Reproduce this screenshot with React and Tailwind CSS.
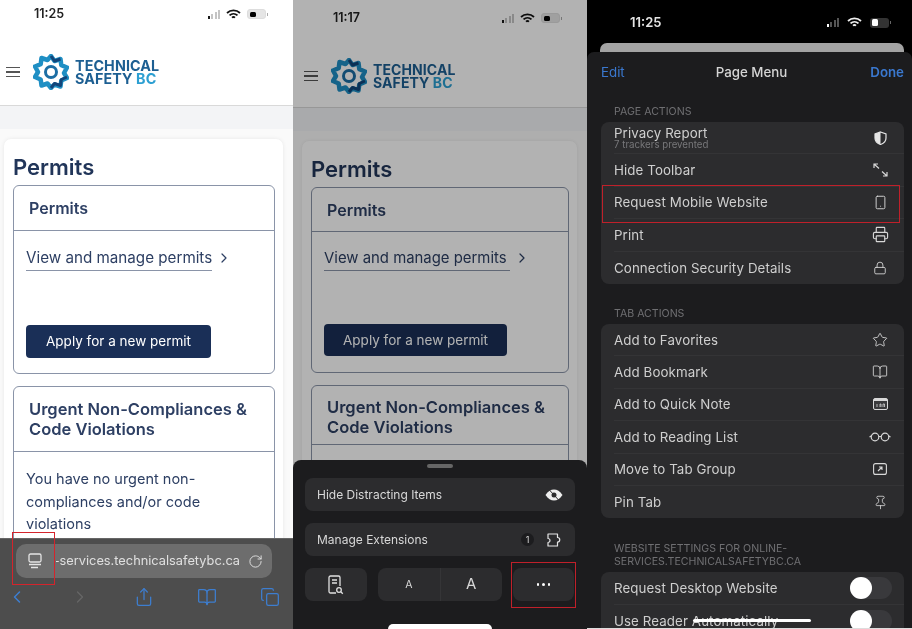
import { BookOpen, ChevronLeft, ChevronRight, Copy, Lock, Pin, Printer, RotateCw, Share, Smartphone, Star } from "lucide-react"

function Signal({ dark }) {
  const on = dark ? "bg-white" : "bg-[#1a1a1a]"
  const off = dark ? "bg-[#555]" : "bg-[#c4c4c4]"
  return (
    <div className="flex items-end gap-[1.5px]">
      <div className={`w-[2px] h-[3px] ${on}`}></div>
      <div className={`w-[2px] h-[5px] ${off}`}></div>
      <div className={`w-[2px] h-[7px] ${off}`}></div>
      <div className={`w-[2px] h-[9px] ${off}`}></div>
    </div>
  )
}

function Wifi({ color }) {
  return (
    <svg width="15" height="11" viewBox="0 0 15 11" fill="none" stroke={color} strokeWidth="1.8">
      <path d="M1 4a9.5 9.5 0 0 1 13 0" />
      <path d="M3.5 6.4a6 6 0 0 1 8 0" />
      <path d="M6 8.6a2.4 2.4 0 0 1 3 0" />
    </svg>
  )
}

function Battery({ dark }) {
  return (
    <div className="flex items-center gap-[1px]">
      <div className={`w-[19px] h-[10px] rounded-[3px] p-[1.5px] ${dark ? "bg-[#333]" : "bg-[#e5e5e5] border border-[#ddd]"}`}>
        <div className={`w-[6px] h-full rounded-[1.5px] ${dark ? "bg-white" : "bg-black"}`}></div>
      </div>
      <div className={`w-[1px] h-[3px] ${dark ? "bg-[#666]" : "bg-[#aaa]"}`}></div>
    </div>
  )
}

function Gear() {
  return (
    <svg width="36" height="36" viewBox="0 0 36 36" fill="none">
      <path
        d="M18 2l3.5 5 6-2 .8 6.2 5.7 2.3-3 5.5 3 5-5.7 2.5-.8 6-6-2L18 34l-3.5-4.5-6 2-.8-6L2 23l3-5-3-5.5 5.7-2.3.8-6.2 6 2z"
        stroke="#1f8fc4"
        strokeWidth="4.5"
        strokeLinejoin="round"
      />
      <path d="M18 2l3.5 5 6-2M34 23l-5.7 2.5-.8 6-6-2L18 34" stroke="#12457a" strokeWidth="3" strokeLinejoin="round" />
      <circle cx="18" cy="18" r="5.5" stroke="#1c6ea4" strokeWidth="3" />
    </svg>
  )
}

function Logo({ textSize }) {
  return (
    <div className="flex items-center gap-[6px] font-['Inter',sans-serif]">
      <Gear />
      <div className="leading-[13px] font-bold tracking-[0.1px] text-[#1d5f92]" style={{ fontSize: textSize }}>
        <div>TECHNICAL</div>
        <div>
          SAFETY <span className="text-[#2c9fd2]">BC</span>
        </div>
      </div>
    </div>
  )
}

// white website view, both left phones use it with small offsets
function WebPage({ time, o }) {
  return (
    <div className="w-full font-['Inter',sans-serif] text-[#2d3f63]">
      <div className="bg-white border-b border-[#d9d9d9]" style={{ height: o.headerH }}>
        <div className="flex items-center justify-between pr-[25px]" style={{ paddingTop: o.statusTop, paddingLeft: o.timeLeft }}>
          <span className="text-[12.5px] leading-[14px] font-semibold text-[#222]">{time}</span>
          <div className="flex items-center gap-[6px]">
            <Signal />
            <Wifi color="#111" />
            <Battery />
          </div>
        </div>
        <div className="flex items-center gap-[13px] mt-[33px]" style={{ paddingLeft: o.burgerLeft }}>
          <div className="flex flex-col gap-[3px]">
            <div className="w-[14px] h-[1.5px] bg-[#555]"></div>
            <div className="w-[14px] h-[1.5px] bg-[#555]"></div>
            <div className="w-[14px] h-[1.5px] bg-[#555]"></div>
          </div>
          <Logo textSize={o.logoSize} />
        </div>
      </div>
      <div className="h-[23px] bg-[#f3f4f6]"></div>
      <div className="bg-[#fafafa] pt-[10px] pr-[10px]" style={{ paddingLeft: o.cardLeft }}>
        <div className="bg-white rounded-t-[7px] shadow-[0_0_4px_rgba(0,0,0,0.08)] pt-[14px] pl-[9px] pr-[8px]">
          <h1 className="text-[22px] leading-[28px] font-semibold text-[#213559]">Permits</h1>
          <div className="mt-[4px] border border-[#8a94a8] rounded-[6px]">
            <div className="flex items-center pl-[15px] border-b border-[#8a94a8] text-[16px] font-semibold" style={{ height: o.head1H }}>
              Permits
            </div>
            <div className="px-[12px]" style={{ height: o.bodyH, paddingTop: o.bodyTop }}>
              <div className="flex items-center gap-[4px]">
                <span className="border-b border-[#8a94a8] w-[186px] leading-[22px] pb-[1px] whitespace-nowrap" style={{ fontSize: o.linkSize }}>
                  View and manage permits
                </span>
                <ChevronRight size={16} strokeWidth={1.8} className="-mt-[3px]" />
              </div>
              <div className="rounded-[4px] bg-[#1a2f57] text-white text-[13.5px] flex items-center justify-center" style={{ marginTop: o.btnTop, height: o.btnH, width: o.btnW }}>
                Apply for a new permit
              </div>
            </div>
          </div>
          <div className="mt-[12px] border border-[#8a94a8] rounded-[6px] h-[200px]">
            <div className="border-b border-[#8a94a8] px-[15px] pt-[12px] text-[16.5px] font-semibold" style={{ height: o.head2H, lineHeight: o.head2Lead }}>
              Urgent Non-Compliances &amp; Code Violations
            </div>
            <p className="px-[12px] pt-[16px] text-[14.5px] leading-[22.5px]">You have no urgent non-compliances and/or code violations</p>
          </div>
        </div>
      </div>
    </div>
  )
}

function SafariBar() {
  return (
    <div className="absolute left-0 right-0 top-[538px] h-[91px] bg-[#4d4d4d] border-t border-[#666] font-['Inter',sans-serif]">
      <div className="ml-[16px] mr-[21px] mt-[5px] h-[34px] rounded-[10px] bg-[#6d6d6d] flex items-center pl-[11px] pr-[9px]">
        <svg width="16" height="17" viewBox="0 0 16 17" fill="none" stroke="#e5e5e5" strokeWidth="1.3">
          <rect x="2" y="1" width="12" height="8" rx="1.5" />
          <path d="M2 11.5h12M4 14.5h7" />
        </svg>
        <div className="w-[184px] ml-[13px] overflow-hidden whitespace-nowrap text-[12.8px] text-[#e0e0e0] flex justify-end">online-services.technicalsafetybc.ca</div>
        <RotateCw size={15} strokeWidth={1.6} className="ml-auto text-[#ddd]" />
      </div>
      <div className="flex items-center pl-[7px] gap-[43.25px] mt-[9px] text-[#3d7ed0]">
        <ChevronLeft size={20} strokeWidth={1.8} />
        <ChevronRight size={20} strokeWidth={1.5} className="text-[#666]" />
        <Share size={20} strokeWidth={1.5} />
        <BookOpen size={20} strokeWidth={1.5} />
        <Copy size={20} strokeWidth={1.5} />
      </div>
    </div>
  )
}

function ReaderIcon() {
  return (
    <svg width="18" height="20" viewBox="0 0 18 20" fill="none" stroke="#e0e0e0" strokeWidth="1.3">
      <path d="M9 18H3.5A1.5 1.5 0 0 1 2 16.5v-14A1.5 1.5 0 0 1 3.5 1h8A1.5 1.5 0 0 1 13 2.5V11" />
      <path d="M5 5h5M5 8h5" />
      <circle cx="12" cy="15" r="2.3" />
      <path d="M13.8 16.8l2 2" />
    </svg>
  )
}

function Sheet() {
  return (
    <div className="absolute left-0 right-0 top-[460px] bottom-0 bg-[#1c1c1e] rounded-t-[8px] px-[12px] font-['Inter',sans-serif] text-[#d8d8d8]">
      <div className="mx-auto mt-[4px] w-[26px] h-[4px] rounded-full bg-[#666]"></div>
      <div className="mt-[10px] h-[33px] rounded-[8px] bg-[#2c2c2e] flex items-center justify-between px-[12px] text-[12px]">
        <span>Hide Distracting Items</span>
        <svg width="18" height="14" viewBox="0 0 18 14">
          <path d="M0.5 7C3 3 6 1.5 9 1.5S15 3 17.5 7C15 11 12 12.5 9 12.5S3 11 0.5 7z" fill="#eee" />
          <circle cx="9" cy="7" r="2.5" fill="#2c2c2e" />
          <path d="M3.5 1L14.5 13" stroke="#2c2c2e" strokeWidth="1" />
        </svg>
      </div>
      <div className="mt-[12px] h-[33px] rounded-[8px] bg-[#2c2c2e] flex items-center px-[12px] text-[12px]">
        <span>Manage Extensions</span>
        <span className="ml-auto w-[13px] h-[13px] rounded-full bg-[#1c1c1e] text-[9px] flex items-center justify-center">1</span>
        <svg className="ml-[13px]" width="16" height="14" viewBox="0 0 16 14" fill="none" stroke="#e5e5e5" strokeWidth="1.2">
          <path d="M1 1h9.5v3.5a2 2 0 1 1 0 4.500V13H1V9.500a1.800 1.800 0 0 0 0-4z" strokeLinejoin="round" />
        </svg>
      </div>
      <div className="mt-[12px] flex gap-[11px] h-[33px]">
        <div className="w-[62px] rounded-[8px] bg-[#2c2c2e] flex items-center justify-center">
          <ReaderIcon />
        </div>
        <div className="w-[124px] rounded-[8px] bg-[#2c2c2e] flex divide-x divide-[#353537]">
          <div className="flex-1 flex items-center justify-center text-[10.5px]">A</div>
          <div className="flex-1 flex items-center justify-center text-[15px]">A</div>
        </div>
        <div className="w-[61px] rounded-[8px] bg-[#2c2c2e] flex items-center justify-center gap-[3px]">
          <div className="w-[2.5px] h-[2.5px] rounded-full bg-white"></div>
          <div className="w-[2.5px] h-[2.5px] rounded-full bg-white"></div>
          <div className="w-[2.5px] h-[2.5px] rounded-full bg-white"></div>
        </div>
      </div>
      <div className="absolute left-[95px] top-[164px] w-[104px] h-[5px] rounded-t-full bg-white"></div>
    </div>
  )
}

function MenuRow({ label, sub, icon, toggle, last }) {
  return (
    <div className={`h-[32.4px] ml-[13px] pr-[13px] flex items-center justify-between ${last ? "" : "border-b border-[#343436]"}`}>
      <div className="leading-none">
        <div className="text-[13.3px] leading-[14px] tracking-[0.1px] text-[#cfcfcf]">{label}</div>
        {sub && <div className="text-[9.7px] leading-[10px] text-[#77777a]">{sub}</div>}
      </div>
      {icon && <div className="w-[22px] flex justify-center text-[#d8d8d8]">{icon}</div>}
      {toggle && (
        <div className="w-[42px] h-[22px] rounded-full bg-[#39393c] -mr-[1px]">
          <div className="w-[22px] h-[22px] rounded-full bg-white"></div>
        </div>
      )}
    </div>
  )
}

function Glasses() {
  return (
    <svg width="22" height="10" viewBox="0 0 22 10" fill="none" stroke="#d8d8d8" strokeWidth="1.2">
      <circle cx="6" cy="5" r="3.8" />
      <circle cx="16" cy="5" r="3.8" />
      <path d="M9.8 4.5h2.4M2.2 4L0.5 5M19.8 4l1.7 1" />
    </svg>
  )
}

function Shield() {
  return (
    <svg width="13" height="14" viewBox="0 0 13 14">
      <path d="M6.5 1L12 3v4c0 3-2.5 5.5-5.5 6.5C3.5 12.500 1 10 1 7V3z" fill="none" stroke="#e5e5e5" strokeWidth="1.2" />
      <path d="M6.5 1v12.500C3.500 12.500 1 10 1 7V3z" fill="#e5e5e5" />
    </svg>
  )
}

function ExpandArrows() {
  return (
    <svg width="15" height="14" viewBox="0 0 15 14" fill="none" stroke="#d8d8d8" strokeWidth="1.2">
      <path d="M1 5V1h4M1 1l5 4.5M14 9v4h-4M14 13L9 8.5" />
    </svg>
  )
}

function NoteIcon() {
  return (
    <svg width="15" height="12" viewBox="0 0 15 12">
      <rect x="0.5" y="0.5" width="14" height="11" rx="1.5" fill="#3a3a3c" stroke="#d8d8d8" />
      <path d="M1 1h13v2H1z" fill="#d8d8d8" />
      <path d="M4 9V6M7 9V6h1v3M10 9V6h1.5v3" stroke="#d8d8d8" strokeWidth="0.8" fill="none" />
    </svg>
  )
}

function TabGroupIcon() {
  return (
    <svg width="14" height="12" viewBox="0 0 14 12" fill="none" stroke="#d8d8d8" strokeWidth="1.1">
      <rect x="0.6" y="0.6" width="12.8" height="10.8" rx="2" />
      <path d="M5 8l4-4M6 4h3v3" />
    </svg>
  )
}

function SectionLabel({ children, className }) {
  return <div className={`ml-[13px] text-[10.6px] leading-[13px] text-[#6f6f72] ${className}`}>{children}</div>
}

function MenuPhone() {
  return (
    <div className="relative w-[325px] h-[629px] overflow-hidden bg-black font-['Inter',sans-serif]">
      <div className="flex items-center justify-between h-[43px] pl-[43px] pr-[21px] pt-[2px]">
        <span className="text-[13px] font-semibold text-[#e5e5e5]">11:25</span>
        <div className="flex items-center gap-[8px]">
          <Signal dark />
          <Wifi color="#eee" />
          <Battery dark />
        </div>
      </div>
      <div className="ml-[13px] mr-[8px] h-[9px] rounded-t-[7px] bg-[#a3a3a3]"></div>
      <div className="h-[577px] bg-[#1c1c1e] rounded-t-[7px] pl-[14px] pr-[8px]">
        <div className="flex items-center justify-between h-[41px] text-[13.3px] pt-[1px]">
          <span className="text-[#3a78cf]">Edit</span>
          <span className="text-[#d5d5d5] font-medium ml-[8px]">Page Menu</span>
          <span className="text-[#3a78cf] font-semibold">Done</span>
        </div>
        <SectionLabel className="mt-[12px] mb-[4px]">PAGE ACTIONS</SectionLabel>
        <div className="rounded-[8px] bg-[#2c2c2e]">
          <MenuRow label="Privacy Report" sub="7 trackers prevented" icon={<Shield />} />
          <MenuRow label="Hide Toolbar" icon={<ExpandArrows />} />
          <MenuRow label="Request Mobile Website" icon={<Smartphone size={15} strokeWidth={1.5} />} />
          <MenuRow label="Print" icon={<Printer size={17} strokeWidth={1.6} />} />
          <MenuRow label="Connection Security Details" icon={<Lock size={14} strokeWidth={1.5} />} last />
        </div>
        <SectionLabel className="mt-[23px] mb-[4px]">TAB ACTIONS</SectionLabel>
        <div className="rounded-[8px] bg-[#2c2c2e]">
          <MenuRow label="Add to Favorites" icon={<Star size={16} strokeWidth={1.3} />} />
          <MenuRow label="Add Bookmark" icon={<BookOpen size={16} strokeWidth={1.3} />} />
          <MenuRow label="Add to Quick Note" icon={<NoteIcon />} />
          <MenuRow label="Add to Reading List" icon={<Glasses />} />
          <MenuRow label="Move to Tab Group" icon={<TabGroupIcon />} />
          <MenuRow label="Pin Tab" icon={<Pin size={15} strokeWidth={1.3} />} last />
        </div>
        <SectionLabel className="mt-[24px] mb-[4px]">
          WEBSITE SETTINGS FOR ONLINE-
          <br />
          SERVICES.TECHNICALSAFETYBC.CA
        </SectionLabel>
        <div className="rounded-[8px] bg-[#2c2c2e]">
          <MenuRow label="Request Desktop Website" toggle />
          <MenuRow label="Use Reader Automatically" toggle last />
        </div>
      </div>
      <div className="absolute left-[15px] top-[185px] w-[298px] h-[38px] border-[1.5px] border-[#c0202a]"></div>
      <div className="absolute left-[106px] top-[619px] w-[118px] h-[3px] rounded-full bg-white"></div>
      <div className="absolute left-0 right-0 bottom-0 h-[1px] bg-[#ddd]"></div>
    </div>
  )
}

export default function App() {
  return (
    <div className="flex w-[912px] h-[629px] overflow-hidden bg-white blur-[0.5px]">
      <div className="relative w-[293px] h-[629px] overflow-hidden">
        <WebPage time="11:25" o={{ headerH: 106, statusTop: 7, timeLeft: 34, burgerLeft: 6, cardLeft: 4, logoSize: 14.3, linkSize: 15.2, head1H: 45, bodyTop: 16, bodyH: 142, btnTop: 54, btnH: 33, btnW: 185, head2H: 65, head2Lead: "20px" }} />
        <SafariBar />
        <div className="absolute left-[12px] top-[532px] w-[43px] h-[53px] border-[1.5px] border-[#d4242c]"></div>
      </div>
      <div className="relative w-[294px] h-[629px] overflow-hidden">
        <WebPage time="11:17" o={{ headerH: 108, statusTop: 11, timeLeft: 40, burgerLeft: 11, cardLeft: 9, logoSize: 14, linkSize: 14.9, head1H: 44, bodyTop: 15, bodyH: 140, btnTop: 53, btnH: 32, btnW: 183, head2H: 59, head2Lead: "19.5px" }} />
        <div className="absolute inset-0 bg-black/30"></div>
        <Sheet />
        <div className="absolute left-[218px] top-[562px] w-[65px] h-[46px] border-[1.5px] border-[#c0202a]"></div>
      </div>
      <MenuPhone />
    </div>
  )
}
